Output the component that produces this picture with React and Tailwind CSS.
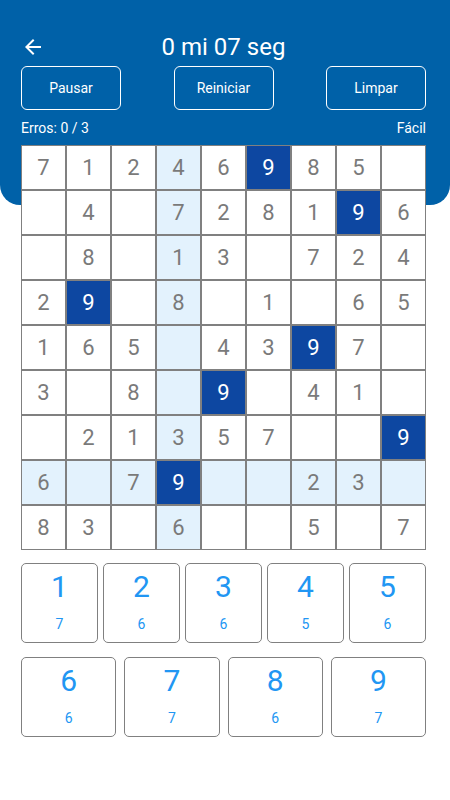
import React from "react";

const board = [
  [7, 1, 2, 4, 6, 9, 8, 5, 0],
  [0, 4, 0, 7, 2, 8, 1, 9, 6],
  [0, 8, 0, 1, 3, 0, 7, 2, 4],
  [2, 9, 0, 8, 0, 1, 0, 6, 5],
  [1, 6, 5, 0, 4, 3, 9, 7, 0],
  [3, 0, 8, 0, 9, 0, 4, 1, 0],
  [0, 2, 1, 3, 5, 7, 0, 0, 9],
  [6, 0, 7, 9, 0, 0, 2, 3, 0],
  [8, 3, 0, 6, 0, 0, 5, 0, 7],
];

const row1 = [
  [1, 7],
  [2, 6],
  [3, 6],
  [4, 5],
  [5, 6],
];
const row2 = [
  [6, 6],
  [7, 7],
  [8, 6],
  [9, 7],
];

function PadButton({ n, c }) {
  return (
    <div className="flex-1 h-[80px] border border-[#808080] rounded-[5px] flex flex-col items-center pt-[6px]">
      <span className="text-[30px] leading-[34px] text-[#2196F3]">{n}</span>
      <span className="text-[14px] leading-[18px] mt-[11px] text-[#2196F3]">{c}</span>
    </div>
  );
}

export default function App() {
  return (
    <div
      className="w-[450px] h-[800px] bg-white"
      style={{ fontFamily: "Roboto, 'Noto Sans', sans-serif" }}
    >
      <div className="bg-[#0061A8] rounded-b-[20px] pt-[31px] pl-[21px] pr-[24px] pb-[67px] text-white">
        <div className="flex items-center h-[32px]">
          <div className="w-[40px] flex items-center">
            <svg width="24" height="24" viewBox="0 0 24 24" fill="white">
              <path d="M20 11H7.83l5.59-5.59L12 4l-8 8 8 8 1.41-1.41L7.83 13H20v-2z" />
            </svg>
          </div>
          <div className="flex-1 text-center text-[24px] leading-[32px]">0 mi 07 seg</div>
          <div className="w-[40px]" />
        </div>
        <div className="flex justify-between mt-[3px]">
          {["Pausar", "Reiniciar", "Limpar"].map((t) => (
            <div
              key={t}
              className="w-[100px] h-[44px] border border-white rounded-[6px] flex items-center justify-center text-[14px]"
            >
              {t}
            </div>
          ))}
        </div>
        <div className="flex justify-between mt-[8px] text-[14px] leading-[20px]">
          <span>Erros: 0 / 3</span>
          <span>Fácil</span>
        </div>
      </div>

      <div className="ml-[21px] -mt-[60px] w-[405px] grid grid-cols-9">
        {board.map((row, r) =>
          row.map((v, c) => {
            const dark = v === 9;
            const hl = r === 7 || c === 3;
            const bg = dark ? "bg-[#0D47A1] text-white" : hl ? "bg-[#E3F2FD] text-[#7a7a7a]" : "bg-white text-[#7a7a7a]";
            return (
              <div
                key={r + "-" + c}
                className={"h-[45px] border border-[#808080] flex items-center justify-center text-[22px] " + bg}
              >
                {v ? v : ""}
              </div>
            );
          })
        )}
      </div>

      <div className="pl-[21px] pr-[24px] mt-[13px]">
        <div className="flex gap-[5px]">
          {row1.map(([n, c]) => (
            <PadButton key={n} n={n} c={c} />
          ))}
        </div>
        <div className="flex gap-[8px] mt-[14px]">
          {row2.map(([n, c]) => (
            <PadButton key={n} n={n} c={c} />
          ))}
        </div>
      </div>
    </div>
  );
}
